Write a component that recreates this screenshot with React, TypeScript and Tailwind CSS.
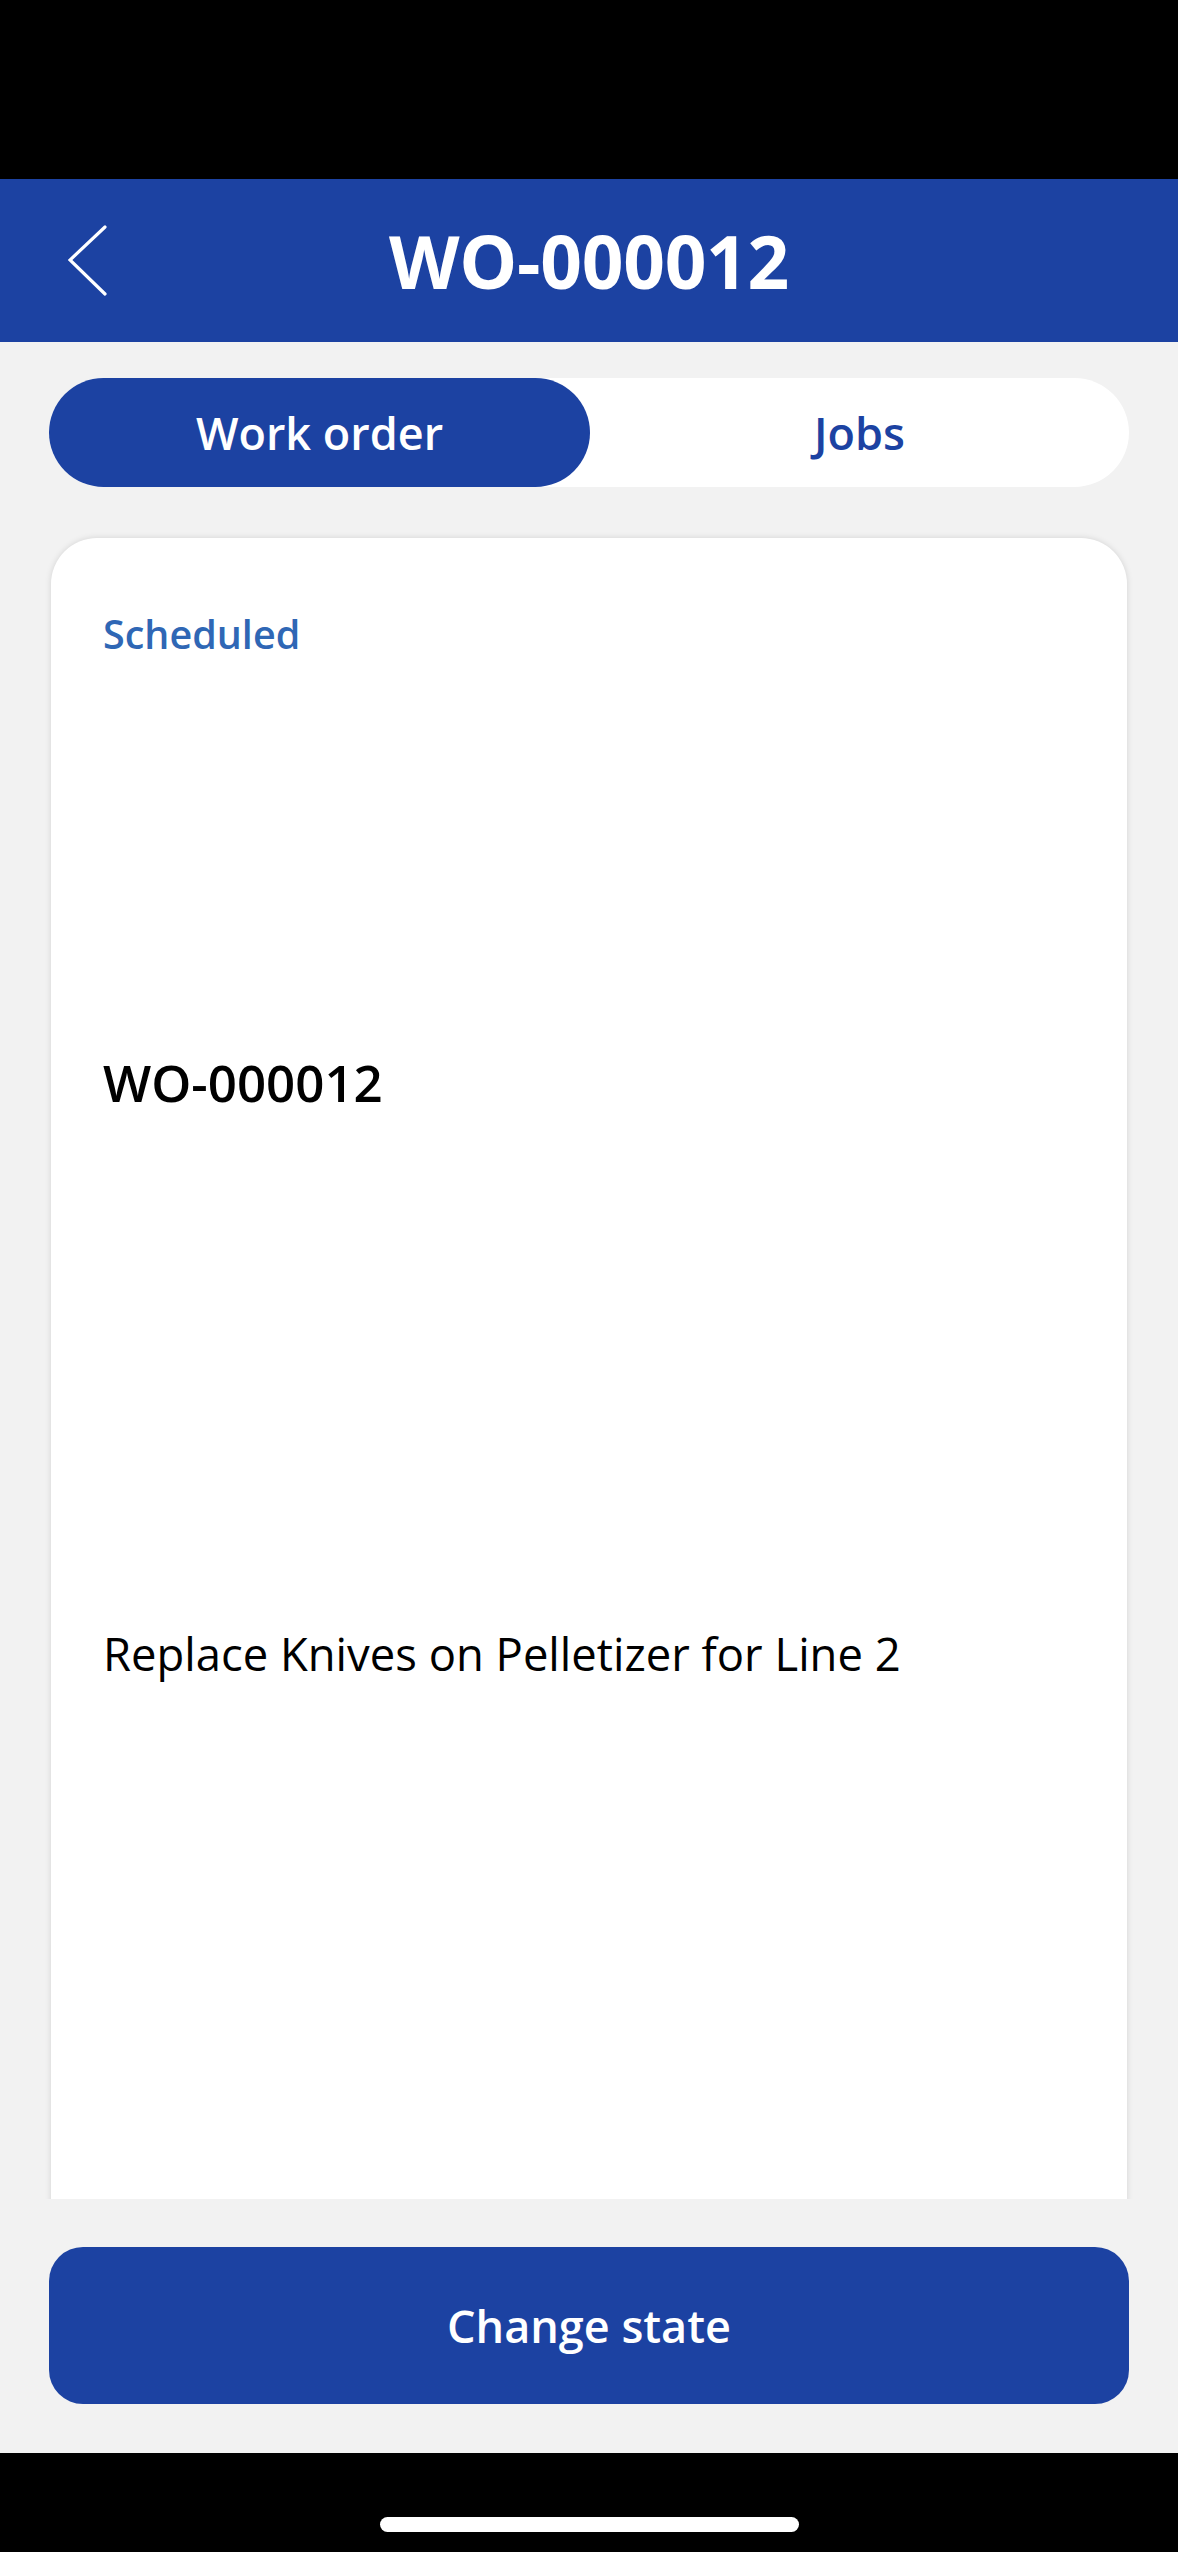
import React from "react";

export default function App() {
  return (
    <div
      className="w-full h-[2552px] flex flex-col bg-[#f2f2f2] overflow-hidden"
      style={{ fontFamily: '"Open Sans", "Noto Sans", sans-serif' }}
    >
      {/* status bar */}
      <div className="h-[179px] shrink-0 bg-black" />

      {/* header */}
      <div className="h-[163px] shrink-0 bg-[#1c42a2] grid grid-cols-[1fr_auto_1fr] items-center">
        <div className="pl-[68px] flex items-center">
          <svg width="40" height="72" viewBox="0 0 40 72" fill="none">
            <path
              d="M37 2 L2 35 L37 69"
              stroke="white"
              strokeWidth="3.2"
              strokeLinecap="round"
              strokeLinejoin="miter"
            />
          </svg>
        </div>
        <div className="text-white text-[73px] leading-[73px] font-bold tracking-[-0.3px]">
          WO-000012
        </div>
        <div />
      </div>

      {/* scroll area */}
      <div className="flex-1 min-h-0 overflow-hidden px-[49px] pt-[36px] flex flex-col">
        <div className="h-[109px] shrink-0 rounded-full bg-white flex">
          <div className="w-[541px] h-full rounded-full bg-[#1c42a2] flex items-center justify-center text-white text-[45px] leading-[45px] font-semibold">
            Work order
          </div>
          <div className="flex-1 h-full flex items-center justify-center text-[#1c42a2] text-[45px] leading-[45px] font-semibold">
            Jobs
          </div>
        </div>

        <div className="mt-[51px] mx-[2px] shrink-0 h-[1800px] rounded-t-[46px] bg-white shadow-[0_0_6px_rgba(0,0,0,0.13)] flex flex-col pl-[52px] pt-[76px]">
          <div className="text-[#2f67b5] text-[39.5px] leading-[40px] font-semibold">
            Scheduled
          </div>
          <div className="mt-[403px] text-black text-[51px] leading-[51px] font-semibold">
            WO-000012
          </div>
          <div className="mt-[523px] text-black text-[45.4px] leading-[45px] font-normal">
            Replace Knives on Pelletizer for Line 2
          </div>
        </div>
      </div>

      {/* bottom action */}
      <div className="h-[254px] shrink-0 bg-[#f2f2f2] px-[49px] pt-[48px]">
        <button className="w-full h-[157px] rounded-[34px] bg-[#1c42a2] flex items-center justify-center text-white text-[45px] leading-[45px] font-semibold">
          Change state
        </button>
      </div>

      {/* home indicator bar */}
      <div className="h-[99px] shrink-0 bg-black flex justify-center pt-[64px]">
        <div className="w-[419px] h-[15px] rounded-full bg-white" />
      </div>
    </div>
  );
}
